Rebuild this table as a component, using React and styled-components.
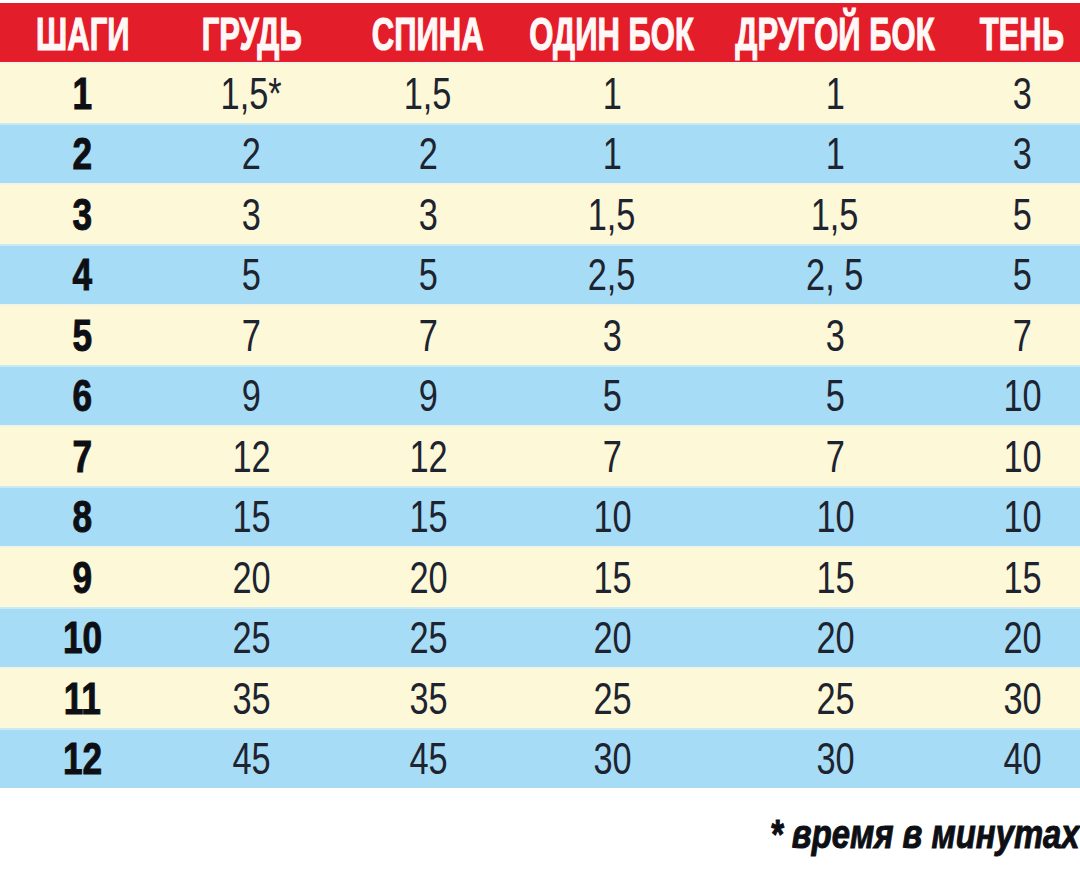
import React from "react";
import styled, { createGlobalStyle } from "styled-components";

const Global = createGlobalStyle`
  html, body { margin: 0; padding: 0; background: #ffffff; overflow: hidden; }
  body { font-family: "Liberation Sans", Arial, sans-serif; }
`;

const Page = styled.div`
  width: 1080px;
  height: 889px;
  padding-top: 3px;
  box-sizing: border-box;
  display: flex;
  flex-direction: column;
  overflow: hidden;
`;

const COLS = "165px 173px 180px 188px 258px 116px";

const HeaderRow = styled.div`
  display: grid;
  grid-template-columns: ${COLS};
  height: 59px;
  background: #e31d2a;
`;

const HeadCell = styled.div`
  display: flex;
  align-items: center;
  justify-content: center;
  color: #fff8f6;
  font-family: "Liberation Sans", Arial, sans-serif;
  font-weight: 700;
  font-size: 47px;
  -webkit-text-stroke: 1.2px #fff8f6;
  white-space: nowrap;
  padding-top: 2px;
`;

const Squeeze = styled.span`
  display: inline-block;
  transform: scaleX(${(p) => p.$x});
  transform-origin: ${(p) => p.$origin || "center center"};
`;

const Row = styled.div`
  display: grid;
  grid-template-columns: ${COLS};
  height: 60.5px;
  box-sizing: border-box;
  background: ${(p) => (p.$alt ? "#a7dcf6" : "#fdf8d7")};
  border-top: 2px solid ${(p) => (p.$alt ? "#c9e9f4" : "#f3f4e6")};
`;

const Cell = styled.div`
  display: flex;
  align-items: center;
  justify-content: center;
  font-family: "Liberation Sans", Arial, sans-serif;
  font-size: 44px;
  font-weight: ${(p) => (p.$step ? 700 : 400)};
  color: ${(p) => (p.$step ? "#0d0f14" : "#1d2430")};
  -webkit-text-stroke: ${(p) => (p.$step ? "1px #0d0f14" : "0")};
  white-space: nowrap;
  padding-top: 1px;
`;

const Note = styled.div`
  margin-top: 24px;
  align-self: flex-end;
  margin-right: 0;
  font-family: "Liberation Sans", Arial, sans-serif;
  font-weight: 700;
  font-style: italic;
  font-size: 40px;
  color: #0d0f14;
  -webkit-text-stroke: 1px #0d0f14;
  white-space: nowrap;
`;

const headers = ["ШАГИ", "ГРУДЬ", "СПИНА", "ОДИН БОК", "ДРУГОЙ БОК", "ТЕНЬ"];

const data = [
  ["1", "1,5*", "1,5", "1", "1", "3"],
  ["2", "2", "2", "1", "1", "3"],
  ["3", "3", "3", "1,5", "1,5", "5"],
  ["4", "5", "5", "2,5", "2, 5", "5"],
  ["5", "7", "7", "3", "3", "7"],
  ["6", "9", "9", "5", "5", "10"],
  ["7", "12", "12", "7", "7", "10"],
  ["8", "15", "15", "10", "10", "10"],
  ["9", "20", "20", "15", "15", "15"],
  ["10", "25", "25", "20", "20", "20"],
  ["11", "35", "35", "25", "25", "30"],
  ["12", "45", "45", "30", "30", "40"],
];

export default function App() {
  return (
    <>
      <Global />
      <Page>
        <HeaderRow>
          {headers.map((h) => (
            <HeadCell key={h}>
              <Squeeze $x={0.66}>{h}</Squeeze>
            </HeadCell>
          ))}
        </HeaderRow>
        {data.map((r, i) => (
          <Row key={i} $alt={i % 2 === 1}>
            {r.map((v, j) => (
              <Cell key={j} $step={j === 0}>
                <Squeeze $x={j === 0 ? 0.8 : 0.78}>{v}</Squeeze>
              </Cell>
            ))}
          </Row>
        ))}
        <Note>
          <Squeeze $x={0.82} $origin="right center">
            * время в минутах
          </Squeeze>
        </Note>
      </Page>
    </>
  );
}
